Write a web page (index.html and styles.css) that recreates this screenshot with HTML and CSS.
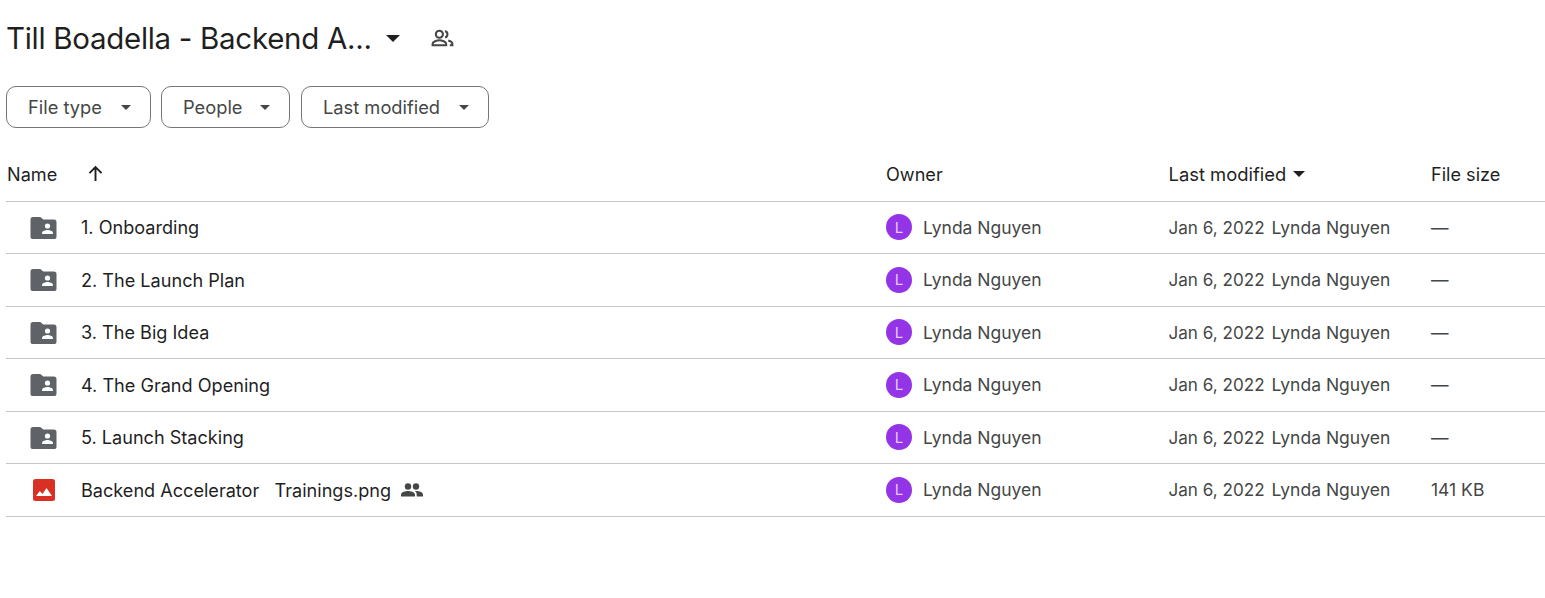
FILE: index.html
```html
<!DOCTYPE html>
<html lang="en">
<head>
<meta charset="utf-8">
<title>Till Boadella - Backend Accelerator</title>
<link rel="stylesheet" href="styles.css">
</head>
<body>
<svg class="defs" width="0" height="0" aria-hidden="true">
  <symbol id="shared-folder" viewBox="0 0 26 22"><path fill="#5f6368" d="M2.6 0h7.2l3 2.6h10.6a2.6 2.6 0 0 1 2.6 2.6v14.2a2.6 2.6 0 0 1-2.6 2.6H2.6A2.6 2.6 0 0 1 0 19.4V2.6A2.6 2.6 0 0 1 2.6 0z"/><circle cx="17" cy="9" r="2.6" fill="#fff"/><path fill="#fff" d="M11.6 17v-1.3c0-1.8 3.6-2.8 5.4-2.8s5.4 1 5.4 2.8V17z"/></symbol>
</svg>
<main class="page">
  <header class="title-bar">
    <h1 class="title">Till Boadella - Backend A...</h1>
    <span class="caret caret-title"></span>
    <svg class="title-people" viewBox="0 0 24 24"><path fill="none" stroke="#444746" stroke-width="2" d="M9 4.500a3.400 3.400 0 1 1 0 6.800 3.400 3.400 0 0 1 0-6.800zM2.500 18.500v-1.400c0-2 4.200-3.400 6.500-3.400s6.500 1.400 6.500 3.400v1.400zM14.500 4.700a3.400 3.400 0 0 1 0 6.400M17.500 14c2 .6 4 1.600 4 3.200v1.300h-2.500"/></svg>
  </header>
  <div class="filters">
    <button class="chip chip-type">File type<span class="caret"></span></button>
    <button class="chip chip-people">People<span class="caret"></span></button>
    <button class="chip chip-modified">Last modified<span class="caret"></span></button>
  </div>
  <div class="table">
    <div class="row head">
      <div class="cell-name"><span>Name</span><svg class="arrow" viewBox="0 0 16 16"><path fill="none" stroke="#1f1f1f" stroke-width="1.800" d="M8 15V2M2.300 7.700 8 2l5.700 5.700"/></svg></div>
      <div>Owner</div>
      <div class="cell-sort">Last modified<span class="caret caret-dark"></span></div>
      <div>File size</div>
    </div>
    <div class="row">
      <div class="cell-name"><svg class="icon-folder"><use href="#shared-folder"/></svg><span>1. Onboarding</span></div>
      <div class="owner"><span class="avatar">L</span>Lynda Nguyen</div>
      <div class="modified"><span class="date">Jan 6, 2022</span><span>Lynda Nguyen</span></div>
      <div class="size">—</div>
    </div>
    <div class="row">
      <div class="cell-name"><svg class="icon-folder"><use href="#shared-folder"/></svg><span>2. The Launch Plan</span></div>
      <div class="owner"><span class="avatar">L</span>Lynda Nguyen</div>
      <div class="modified"><span class="date">Jan 6, 2022</span><span>Lynda Nguyen</span></div>
      <div class="size">—</div>
    </div>
    <div class="row">
      <div class="cell-name"><svg class="icon-folder"><use href="#shared-folder"/></svg><span>3. The Big Idea</span></div>
      <div class="owner"><span class="avatar">L</span>Lynda Nguyen</div>
      <div class="modified"><span class="date">Jan 6, 2022</span><span>Lynda Nguyen</span></div>
      <div class="size">—</div>
    </div>
    <div class="row">
      <div class="cell-name"><svg class="icon-folder"><use href="#shared-folder"/></svg><span>4. The Grand Opening</span></div>
      <div class="owner"><span class="avatar">L</span>Lynda Nguyen</div>
      <div class="modified"><span class="date">Jan 6, 2022</span><span>Lynda Nguyen</span></div>
      <div class="size">—</div>
    </div>
    <div class="row">
      <div class="cell-name"><svg class="icon-folder"><use href="#shared-folder"/></svg><span>5. Launch Stacking</span></div>
      <div class="owner"><span class="avatar">L</span>Lynda Nguyen</div>
      <div class="modified"><span class="date">Jan 6, 2022</span><span>Lynda Nguyen</span></div>
      <div class="size">—</div>
    </div>
    <div class="row">
      <div class="cell-name"><svg class="icon-image" viewBox="0 0 22 22"><rect width="22" height="22" rx="2.500" fill="#d93025"/><path fill="#fff" d="M3 17l3.800-5 2.700 3 4-6 5.500 8z"/></svg><span class="file-name">Backend Accelerator&nbsp;&nbsp; Trainings.png</span><svg class="shared" viewBox="0 0 22 14"><circle cx="7" cy="3.500" r="3.200" fill="#444746"/><circle cx="15" cy="3.500" r="3.200" fill="#444746"/><path fill="#444746" d="M0 13.500v-2c0-2.400 4.700-3.500 7-3.500s7 1.100 7 3.500v2zM15.500 8c2.300 0 6.500 1.100 6.500 3.500v2h-6.300v-2c0-1.400-.7-2.600-1.800-3.400z"/></svg></div>
      <div class="owner"><span class="avatar">L</span>Lynda Nguyen</div>
      <div class="modified"><span class="date">Jan 6, 2022</span><span>Lynda Nguyen</span></div>
      <div class="size">141 KB</div>
    </div>
  </div>
</main>
</body>
</html>
```
FILE: styles.css
```css
* { box-sizing: border-box; }
html, body { margin: 0; background: #fff; }
body { font-family: Inter, Roboto, sans-serif; color: #1f1f1f; overflow: hidden; }
.defs { position: absolute; }
.page { padding: 0 0 0 6px; }
.title-bar { display: flex; align-items: center; height: 76px; }
.title { margin: 0; font-family: Inter, sans-serif; font-weight: 400; font-size: 29.500px; line-height: 40px; letter-spacing: -.3px; color: #1f1f1f; }
.caret { display: inline-block; width: 0; height: 0; border-left: 5.500px solid transparent; border-right: 5.500px solid transparent; border-top: 5.500px solid #444746; }
.caret-title { margin-left: 14px; border-left-width: 7.500px; border-right-width: 7.500px; border-top-width: 7px; border-top-color: #1f1f1f; }
.title-people { width: 25px; height: 25px; margin-left: 30px; }
.filters { display: flex; gap: 10px; height: 42px; margin-top: 10px; }
.chip { display: flex; align-items: center; justify-content: space-between; height: 42px; padding: 0 19px 0 21px; border: 1px solid #747775; border-radius: 10px; background: #fff; font-family: Inter, sans-serif; font-size: 18.300px; color: #444746; }
.chip-type { width: 145px; }
.chip-people { width: 129px; }
.chip-modified { width: 188px; margin-left: 1px; }
.table { margin-top: 21px; }
.row { display: grid; grid-template-columns: 880px 282.500px 262.500px 1fr; align-items: center; height: 52.500px; border-bottom: 1px solid #c7c7c7; font-size: 17.500px; color: #444746; }
.row.head { height: 52.700px; color: #1f1f1f; padding-bottom: 2px; font-size: 18.100px; }
.cell-name { display: flex; align-items: center; color: #1f1f1f; padding-left: 24px; font-size: 18.100px; }
.head .cell-name { padding-left: 1px; }
.arrow { width: 17px; height: 17px; margin-left: 30px; }
.cell-sort { display: flex; align-items: center; gap: 7px; font-size: 18.400px; }
.caret-dark { border-left-width: 6.500px; border-right-width: 6.500px; border-top-width: 6.500px; border-top-color: #1f1f1f; }
.icon-folder { width: 27px; height: 22px; flex: none; margin: 1px 24px 0 0; }
.icon-image { width: 22px; height: 22px; flex: none; margin: 0 26px 0 3px; }
.shared { width: 22px; height: 14px; margin-left: 10px; }
.owner { display: flex; align-items: center; gap: 11px; }
.avatar { display: flex; align-items: center; justify-content: center; width: 26px; height: 26px; border-radius: 50%; background: #9334e6; color: #e3ccfa; font-size: 15px; }
.modified { display: flex; gap: 7px; }
.date { font-size: 17.100px; }
```
